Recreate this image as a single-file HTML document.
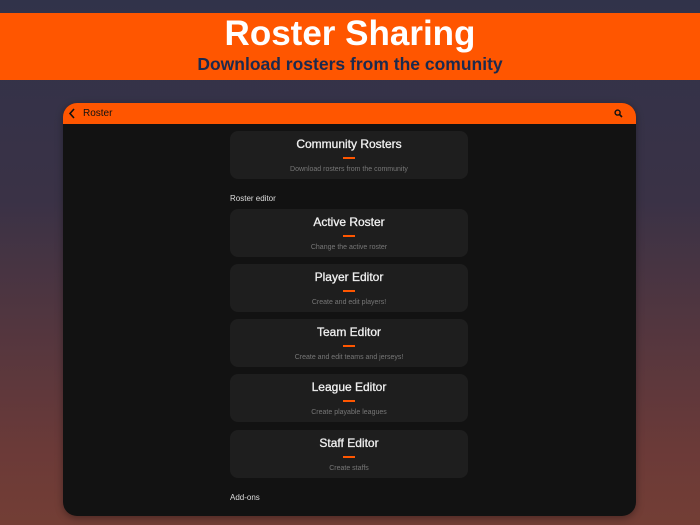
<!DOCTYPE html>
<html><head><meta charset="utf-8"><style>
*{margin:0;padding:0;box-sizing:border-box}
html,body{width:700px;height:525px;overflow:hidden}
body{background:linear-gradient(#31334a 0px,#3a3246 200px,#6b3a38 450px,#733e35 525px);font-family:"Liberation Sans",sans-serif;position:relative}
.banner{position:absolute;left:0;top:13px;width:700px;height:67px;background:#ff5600;text-align:center}
.banner h1{color:#fff;font-size:35px;font-weight:bold;line-height:36px;margin-top:3px;letter-spacing:0}
.banner h2{color:#1c2a4e;font-size:17.5px;font-weight:bold;margin-top:3px;line-height:18px}
.dev{position:absolute;left:63px;top:103px;width:573px;height:413px;background:#121212;border-radius:14px;overflow:hidden;box-shadow:0 2px 8px rgba(0,0,0,.35)}
.hdr{height:21px;background:#ff5600;position:relative}
.hdr span{position:absolute;left:20px;top:5px;font-size:10px;color:#111}
.card{position:absolute;left:167px;width:238px;height:48px;background:#1e1e1e;border-radius:8px;text-align:center}
.card b{display:block;color:#f0f0f0;font-size:12px;font-weight:normal;margin-top:6px;line-height:14px;-webkit-text-stroke:0.3px #f0f0f0}
.card i{display:block;width:12px;height:2px;background:#ff5600;margin:6px auto 0}
.card s{display:block;text-decoration:none;color:#777;font-size:7px;margin-top:7px}
.lbl{position:absolute;left:167px;color:#ddd;font-size:8px}
</style></head><body>
<div class="banner"><h1>Roster Sharing</h1><h2>Download rosters from the comunity</h2></div>
<div class="dev">
<div class="hdr">
<svg style="position:absolute;left:5px;top:5px" width="8" height="11" viewBox="0 0 8 11"><path d="M6 1L2 5.5L6 10" stroke="#111" stroke-width="1.6" fill="none"/></svg>
<span>Roster</span>
<svg style="position:absolute;left:551px;top:6px" width="9" height="9" viewBox="0 0 9 9"><circle cx="3.6" cy="3.6" r="2.5" stroke="#111" stroke-width="1.4" fill="none"/><path d="M5.5 5.5L8 8" stroke="#111" stroke-width="1.6"/></svg>
</div>
<div class="card" style="top:28px"><b>Community Rosters</b><i></i><s>Download rosters from the community</s></div>
<div class="lbl" style="top:91px">Roster editor</div>
<div class="card" style="top:106px"><b>Active Roster</b><i></i><s>Change the active roster</s></div>
<div class="card" style="top:161px"><b>Player Editor</b><i></i><s>Create and edit players!</s></div>
<div class="card" style="top:216px"><b>Team Editor</b><i></i><s>Create and edit teams and jerseys!</s></div>
<div class="card" style="top:271px"><b>League Editor</b><i></i><s>Create playable leagues</s></div>
<div class="card" style="top:327px"><b>Staff Editor</b><i></i><s>Create staffs</s></div>
<div class="lbl" style="top:390px">Add-ons</div>
</div>
</body></html>
